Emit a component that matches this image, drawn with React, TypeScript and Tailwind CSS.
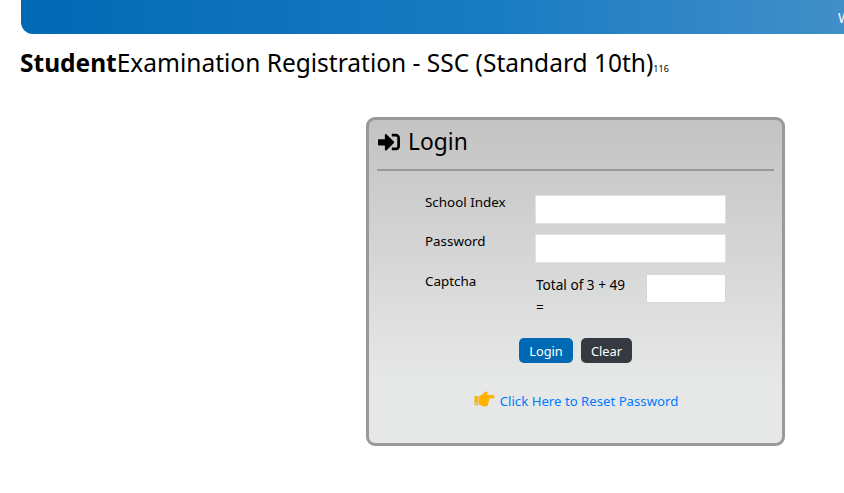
import { FaHandPointRight, FaSignInAlt } from "react-icons/fa";

const Field = ({ label, height }: { label: string; height: string }) => (
  <div className={`flex ${height}`}>
    <div className="w-[110px] text-[13.4px] leading-[21px] mt-[-3px]">{label}</div>
    <input className="w-[191px] h-[29px] bg-white border border-[#dfe2e7]" />
  </div>
);

const App = () => {
  return (
    <div className="w-[844px] h-[493px] overflow-hidden bg-white text-black font-['Noto_Sans',sans-serif]">
      <div className="ml-[21px] h-[34px] rounded-bl-[12px] bg-gradient-to-r from-[#0069b4] via-[#1a7cc3] via-60% to-[#408fc8] flex items-center justify-end overflow-hidden">
        <span className="text-white text-[14px] w-[6px] overflow-hidden">W</span>
      </div>

      <h1 className="ml-[20px] mt-[13px] h-[32px] text-[24.5px] leading-[32px] whitespace-nowrap">
        <b>Student</b>Examination Registration - SSC (Standard 10th)
        <span className="text-[9px]">116</span>
      </h1>

      <div className="ml-[366px] mt-[38px] w-[419px] h-[329px] border-[3px] border-[#999999] rounded-[9px] bg-gradient-to-b from-[#c3c3c3] to-[#e6e7e7] to-80% px-[8px]">
        <div className="h-[51px] border-b-2 border-[#999999] flex items-center gap-[6px] pb-[6px]">
          <FaSignInAlt className="w-[26px] h-[22px] ml-[-1px]" />
          <span className="text-[22.8px] leading-[32px]">Login</span>
        </div>

        <div className="ml-[48px] mt-[24px]">
          <Field label="School Index" height="h-[39px]" />
          <Field label="Password" height="h-[40px]" />
          <div className="flex h-[64px]">
            <div className="w-[110px] text-[13.4px] leading-[21px] mt-[-3px]">Captcha</div>
            <div className="w-[111px] text-[13.6px] leading-[22px] pl-[1px] pr-[13px]">Total of 3 + 49 =</div>
            <input className="w-[80px] h-[29px] bg-white border border-[#d3d7de]" />
          </div>
        </div>

        <div className="flex justify-center gap-[8px]">
          <button className="h-[25px] w-[54px] rounded-[5px] bg-[#0069b4] text-white text-[12.8px] pt-[2px]">Login</button>
          <button className="h-[25px] w-[51px] rounded-[5px] bg-[#343a40] text-white text-[12.8px] pt-[2px]">Clear</button>
        </div>

        <div className="flex justify-center items-center gap-[4px] mt-[26px]">
          <FaHandPointRight className="w-[23px] h-[20px] text-[#ffb300] mb-[4px]" />
          <a className="text-[13.2px] leading-[21px] text-[#007bff]">Click Here to Reset Password</a>
        </div>
      </div>
    </div>
  );
};

export default App;
